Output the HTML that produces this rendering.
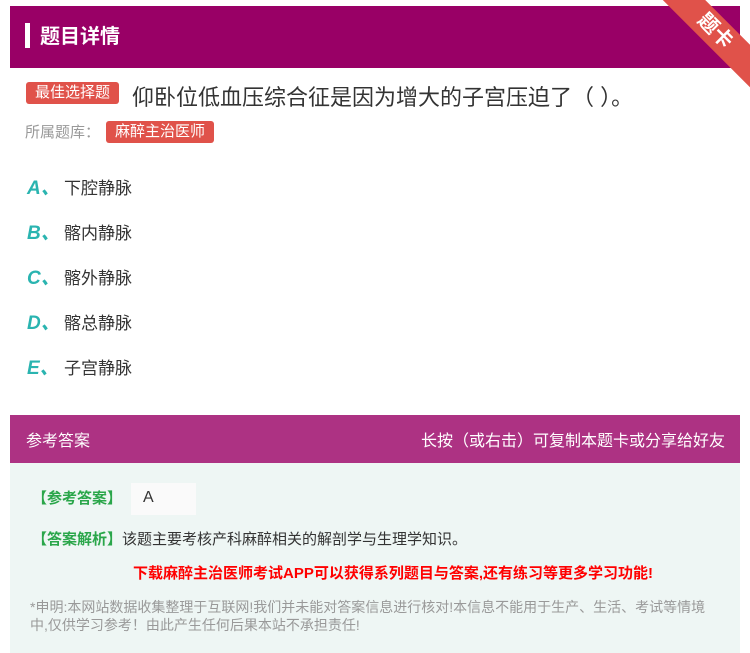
<!DOCTYPE html>
<html><head><meta charset="utf-8"><style>
*{margin:0;padding:0;box-sizing:border-box}
body{width:750px;height:653px;background:#fff;font-family:"Liberation Sans","Noto Sans CJK SC",sans-serif;position:relative;overflow:hidden}
.hd{position:absolute;left:10px;top:6px;width:730px;height:62px;background:#990066}
.hd .bar{position:absolute;left:15px;top:17px;width:5px;height:25px;background:#fff}
.hd .t{position:absolute;left:30px;top:14px;color:#fff;font-size:20px;font-weight:bold}
.rib{position:absolute;right:-30px;top:16px;width:130px;height:30px;background:#e0524a;transform:rotate(45deg);color:#fff;font-size:20px;text-align:center;line-height:30px;font-weight:bold}
.tag{position:absolute;background:#e0524a;color:#fff;border-radius:3px;font-size:15px;line-height:22px;padding:0 9px}
.q{position:absolute;left:132px;top:80px;font-size:22px;color:#333}
.src{position:absolute;left:25px;top:121px;font-size:15px;color:#999}
.op{position:absolute;left:27px;font-size:17px;color:#333}
.op b{color:#2ab4b0;font-style:italic;font-size:19px;display:inline-block;width:37px}
.ah{position:absolute;left:10px;top:415px;width:730px;height:48px;background:#ad3283;color:#fff;font-size:16px}
.ab{position:absolute;left:10px;top:463px;width:730px;height:190px;background:#eef6f4}
.g{color:#2aa64a;font-weight:bold;font-size:15px}
</style></head><body>
<div class="hd"><div class="bar"></div><div class="t">题目详情</div></div>
<div class="rib">题卡</div>
<div class="tag" style="left:26px;top:82px">最佳选择题</div>
<div class="q">仰卧位低血压综合征是因为增大的子宫压迫了（ ）。</div>
<div class="src">所属题库：</div>
<div class="tag" style="left:106px;top:121px">麻醉主治医师</div>
<div class="op" style="top:173px"><b>A、</b>下腔静脉</div>
<div class="op" style="top:218px"><b>B、</b>髂内静脉</div>
<div class="op" style="top:263px"><b>C、</b>髂外静脉</div>
<div class="op" style="top:308px"><b>D、</b>髂总静脉</div>
<div class="op" style="top:353px"><b>E、</b>子宫静脉</div>
<div class="ah"><span style="position:absolute;left:16px;top:12px">参考答案</span><span style="position:absolute;right:15px;top:12px">长按（或右击）可复制本题卡或分享给好友</span></div>
<div class="ab">
<div style="position:absolute;left:22px;top:24px" class="g">【参考答案】</div>
<div style="position:absolute;left:121px;top:20px;width:65px;height:32px;background:#fafafa;font-size:16px;padding:6px 12px;color:#333">A</div>
<div style="position:absolute;left:22px;top:65px;font-size:15px;color:#333"><span class="g">【答案解析】</span>该题主要考核产科麻醉相关的解剖学与生理学知识。</div>
<div style="position:absolute;left:123px;top:99px;font-size:15px;color:#f00;font-weight:bold">下载麻醉主治医师考试APP可以获得系列题目与答案,还有练习等更多学习功能!</div>
<div style="position:absolute;left:20px;top:135px;width:690px;font-size:14px;color:#999;line-height:18px">*申明:本网站数据收集整理于互联网!我们并未能对答案信息进行核对!本信息不能用于生产、生活、考试等情境中,仅供学习参考！由此产生任何后果本站不承担责任!</div>
</div>
</body></html>
